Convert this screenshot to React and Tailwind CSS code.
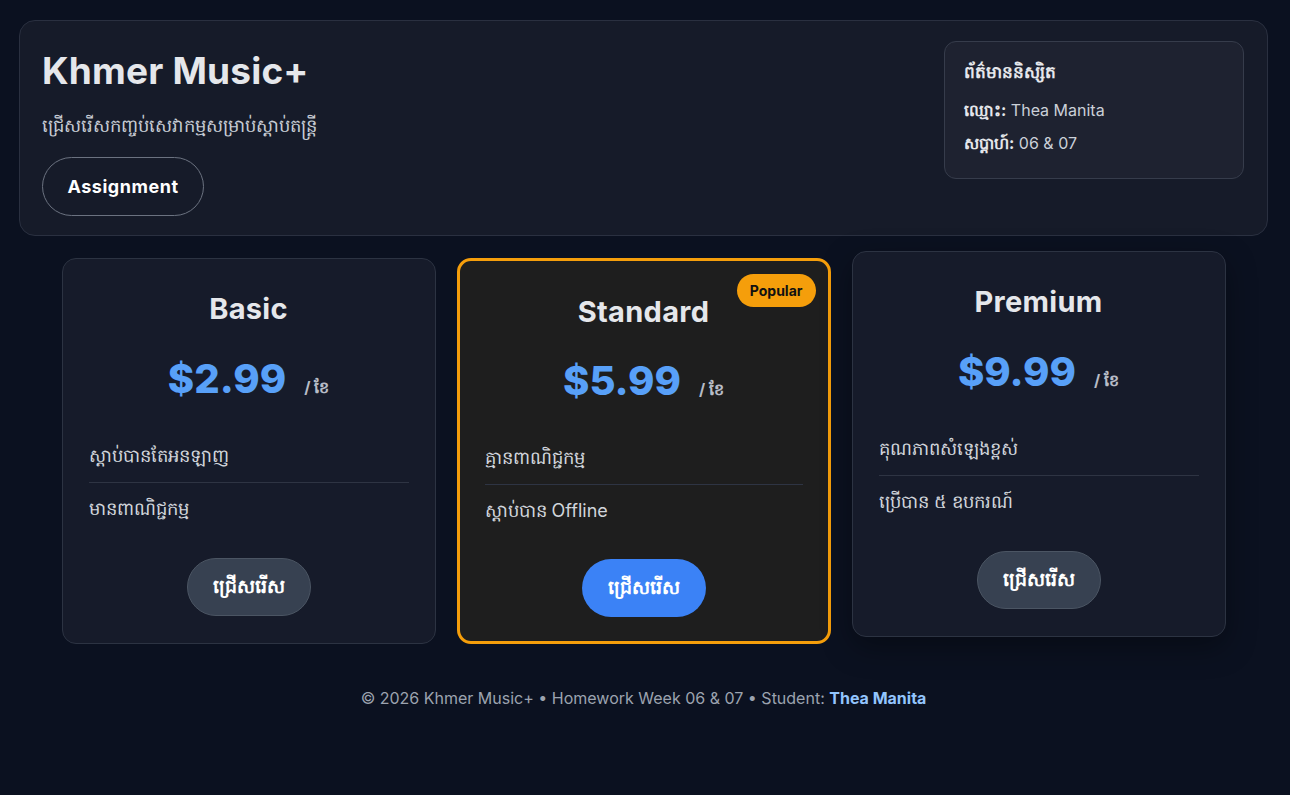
import React from 'react'

const plans = [
  {
    name: 'Basic',
    price: '$2.99',
    features: ['ស្តាប់បានតែអនឡាញ', 'មានពាណិជ្ជកម្ម'],
    popular: false,
    lifted: false,
  },
  {
    name: 'Standard',
    price: '$5.99',
    features: ['គ្មានពាណិជ្ជកម្ម', 'ស្តាប់បាន Offline'],
    popular: true,
    lifted: false,
  },
  {
    name: 'Premium',
    price: '$9.99',
    features: ['គុណភាពសំឡេងខ្ពស់', 'ប្រើបាន ៥ ឧបករណ៍'],
    popular: false,
    lifted: true,
  },
]

function PlanCard({ plan }) {
  const base = plan.popular
    ? 'border-[3px] border-[#f59e0b] bg-[#1e1e1e] px-[25px] pb-[24px]'
    : 'border border-[#2c3342] bg-[#161b2a] px-[26px] pb-[27px]'
  return (
    <div
      className={`relative flex h-[386px] flex-col rounded-[14px] ${base} ${
        plan.lifted ? '-translate-y-[7px] shadow-[0_10px_30px_rgba(0,0,0,0.35)]' : ''
      }`}
    >
      {plan.popular && (
        <span className="absolute right-[12px] top-[13px] rounded-full bg-[#f59e0b] px-[13px] py-[6px] text-[14px] font-bold leading-[21px] text-[#111]">
          Popular
        </span>
      )}
      <h2 className={`text-center text-[29px] font-bold leading-none tracking-[0.01em] text-[#e5e7eb] ${plan.popular ? 'pt-[36px]' : 'pt-[35px]'}`}>
        {plan.name}
      </h2>
      <div className={`flex items-baseline justify-center ${plan.popular ? 'mt-[35px]' : 'mt-[36px]'}`}>
        <span className="text-[40px] font-extrabold leading-none text-[#58a0f8]">{plan.price}</span>
        <span className="ml-[18px] text-[16px] font-bold text-[#b7bcc6]">/ ខែ</span>
      </div>
      <ul className="mt-[43px] text-[18px] text-[#d1d5db]">
        <li className="border-b border-[#2e3443] pb-[12px] leading-[28px]">{plan.features[0]}</li>
        <li className="pt-[12px] leading-[28px]">{plan.features[1]}</li>
      </ul>
      <div className="mt-auto flex justify-center">
        <button
          className={`h-[58px] w-[124px] rounded-full text-[19px] font-bold text-white ${
            plan.popular ? 'bg-[#3b82f6]' : 'border border-[#4b5563] bg-[#374151]'
          }`}
        >
          ជ្រើសរើស
        </button>
      </div>
    </div>
  )
}

export default function App() {
  return (
    <div className="min-h-[795px] bg-[#0b1120] pl-[19px] pr-[22px] pt-[20px] font-['Inter','Noto_Sans','DejaVu_Sans',sans-serif] text-[#e5e7eb]">
      <header className="flex h-[216px] items-start justify-between rounded-[16px] border border-[#2a3040] bg-[#161b29] pl-[22px] pr-[23px] pt-[20px]">
        <div>
          <h1 className="pt-[11px] text-[37px] font-bold leading-none tracking-[0.005em] text-[#e5e7eb]">Khmer Music+</h1>
          <p className="mt-[23px] text-[18px] leading-[28px] text-[#c7ccd4]">ជ្រើសរើសកញ្ចប់សេវាកម្មសម្រាប់ស្តាប់តន្ត្រី</p>
          <button className="mt-[17px] h-[59px] w-[162px] rounded-full border border-[#6b7280] text-[18px] font-bold tracking-[0.03em] text-white">
            Assignment
          </button>
        </div>
        <div className="h-[138px] w-[300px] rounded-[12px] border border-[#363c4b] bg-[#1e2230] px-[19px] pt-[17px]">
          <h3 className="text-[17px] font-bold leading-[26px] text-[#e5e7eb]">ព័ត៌មាននិស្សិត</h3>
          <p className="mt-[12px] text-[16px] leading-[26px] text-[#cbd0d8]">
            <span className="font-bold text-[#e5e7eb]">ឈ្មោះ:</span> Thea Manita
          </p>
          <p className="mt-[7px] text-[16px] leading-[26px] text-[#cbd0d8]">
            <span className="font-bold text-[#e5e7eb]">សប្តាហ៍:</span> 06 &amp; 07
          </p>
        </div>
      </header>

      <main className="mx-auto mt-[22px] grid w-[1164px] grid-cols-3 gap-[21px]">
        {plans.map((p) => (
          <PlanCard key={p.name} plan={p} />
        ))}
      </main>

      <footer className="mt-[42px] text-center text-[16px] text-[#9ca3af]">
        © 2026 Khmer Music+ • Homework Week 06 &amp; 07 • Student:{' '}
        <span className="font-bold text-[#93c5fd]">Thea Manita</span>
      </footer>
    </div>
  )
}
